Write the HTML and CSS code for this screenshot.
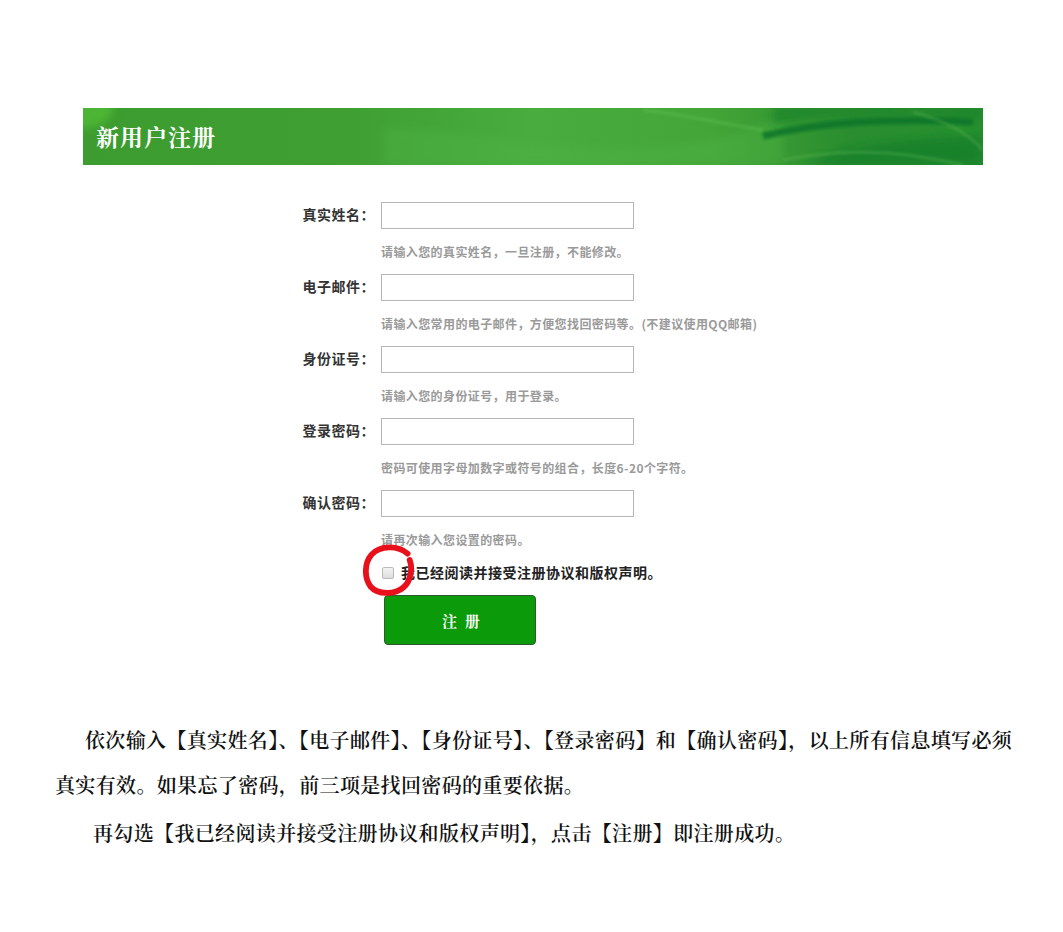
FILE: index.html
```html
<!DOCTYPE html>
<html lang="zh-CN">
<head>
<meta charset="utf-8">
<title>新用户注册</title>
<link rel="stylesheet" href="styles.css">
</head>
<body>
<div class="banner">
  <svg class="banner-bg" viewBox="0 0 900 57" preserveAspectRatio="none" aria-hidden="true">
    <defs>
      <linearGradient id="base" x1="0" y1="0" x2="1" y2="0">
        <stop offset="0" stop-color="#3d9c2f"/>
        <stop offset="0.3" stop-color="#3f9f33"/>
        <stop offset="0.5" stop-color="#48ad3e"/>
        <stop offset="0.7" stop-color="#43a537"/>
        <stop offset="0.85" stop-color="#2a8d2f"/>
        <stop offset="1" stop-color="#27902f"/>
      </linearGradient>
      <filter id="blur" x="-20%" y="-50%" width="140%" height="200%">
        <feGaussianBlur stdDeviation="4"/>
      </filter>
      <filter id="blur2" x="-20%" y="-50%" width="140%" height="200%">
        <feGaussianBlur stdDeviation="1.5"/>
      </filter>
    </defs>
    <rect width="900" height="57" fill="url(#base)"/>
    <ellipse cx="0" cy="0" rx="30" ry="20" fill="#5ccf3a" opacity="0.5" filter="url(#blur)"/>
    <path d="M300 20 C380 20 460 45 560 40 C620 37 660 25 700 10 L700 57 L300 57 Z" fill="#4fb447" opacity="0.4" filter="url(#blur)"/>
    <path d="M720 57 C760 38 820 30 900 28 L900 57 Z" fill="#15802a" opacity="0.85" filter="url(#blur)"/>
    <path d="M690 16 C760 2 830 4 900 12 L900 0 L690 0 Z" fill="#1a842b" opacity="0.85" filter="url(#blur)"/>
    <path d="M680 28 C740 14 800 10 890 14" stroke="#0f7529" stroke-width="7" fill="none" opacity="0.85" filter="url(#blur2)"/>
    <path d="M700 52 C760 40 820 42 880 57" stroke="#6cc05c" stroke-width="2" fill="none" opacity="0.45" filter="url(#blur2)"/>
    <path d="M830 4 C860 12 885 25 900 42" stroke="#72c462" stroke-width="2" fill="none" opacity="0.4" filter="url(#blur2)"/>
    <path d="M560 2 C600 6 640 16 680 22" stroke="#6fd060" stroke-width="3" fill="none" opacity="0.3" filter="url(#blur2)"/>
  </svg>
  <h1 class="banner-title">新用户注册</h1>
</div>

<form class="reg-form">
  <div class="field">
    <label class="field-label">真实姓名：</label>
    <input class="field-input" type="text">
  </div>
  <div class="hint">请输入您的真实姓名，一旦注册，不能修改。</div>

  <div class="field">
    <label class="field-label">电子邮件：</label>
    <input class="field-input" type="text">
  </div>
  <div class="hint">请输入您常用的电子邮件，方便您找回密码等。(不建议使用QQ邮箱)</div>

  <div class="field">
    <label class="field-label">身份证号：</label>
    <input class="field-input" type="text">
  </div>
  <div class="hint">请输入您的身份证号，用于登录。</div>

  <div class="field">
    <label class="field-label">登录密码：</label>
    <input class="field-input" type="password">
  </div>
  <div class="hint">密码可使用字母加数字或符号的组合，长度6-20个字符。</div>

  <div class="field">
    <label class="field-label">确认密码：</label>
    <input class="field-input" type="password">
  </div>
  <div class="hint">请再次输入您设置的密码。</div>

  <div class="agree">
    <span class="check"></span>
    <span class="agree-text">我已经阅读并接受注册协议和版权声明。</span>
    <svg class="circle-mark" viewBox="0 0 50 50" aria-hidden="true">
      <path d="M43 10 C34 2 17 2 9 11 C2 19 2 33 8 41 C15 49 31 49 39 42 C46 36 48 24 45 16" fill="none" stroke="#e8101a" stroke-width="5.5" stroke-linecap="round"/>
    </svg>
  </div>

  <button class="submit" type="button">注 册</button>
</form>

<div class="notes">
  <p class="note note-first">依次输入【真实姓名】、【电子邮件】、【身份证号】、【登录密码】和【确认密码】，以上所有信息填写必须<br>真实有效。如果忘了密码，前三项是找回密码的重要依据。</p>
  <p class="note note-second">再勾选【我已经阅读并接受注册协议和版权声明】，点击【注册】即注册成功。</p>
</div>
</body>
</html>
```

FILE: styles.css
```css
* { box-sizing: border-box; }

html, body {
  margin: 0;
  padding: 0;
  background: #ffffff;
}

body {
  padding-top: 108px;
  font-family: "Liberation Sans", "Noto Sans CJK SC", sans-serif;
  color: #222;
}

.banner {
  position: relative;
  width: 900px;
  height: 57px;
  margin-left: 83px;
  overflow: hidden;
  display: flex;
  align-items: center;
}

.banner-bg {
  position: absolute;
  inset: 0;
  width: 100%;
  height: 100%;
}

.banner-title {
  position: relative;
  margin: 0 0 0 13px;
  font-family: "Noto Serif CJK SC", "Noto Sans CJK SC", serif;
  font-size: 23px;
  font-weight: 700;
  color: #ffffff;
  letter-spacing: 1px;
  line-height: 1;
}

.reg-form {
  margin: 37px 0 0 288px;
  display: flex;
  flex-direction: column;
  align-items: flex-start;
}

.field {
  display: flex;
  align-items: center;
  height: 27px;
}

.field + .hint { margin-top: 16px; }
.hint + .field { margin-top: 15px; }

.field-label {
  width: 87px;
  margin-top: -3px;
  text-align: right;
  font-size: 14px;
  font-weight: 700;
  color: #333;
  font-family: "Noto Sans CJK SC", sans-serif;
  letter-spacing: 0.5px;
}

.field-input {
  margin-left: 6px;
  width: 253px;
  height: 27px;
  border: 1px solid #b5b5b5;
  background: #fff;
  padding: 0 4px;
  font-size: 13px;
}

.hint {
  margin-left: 93px;
  font-size: 12px;
  line-height: 14px;
  color: #9a9a9a;
  font-weight: 700;
  font-family: "Noto Sans CJK SC", sans-serif;
  letter-spacing: 0.4px;
}

.agree {
  position: relative;
  margin: 17px 0 0 93px;
  height: 18px;
  display: flex;
  align-items: center;
}

.check {
  width: 12px;
  height: 12px;
  border: 1px solid #b9b9b9;
  border-radius: 2px;
  background: linear-gradient(#f4f4f4, #dcdcdc);
  margin-left: 1px;
}

.agree-text {
  margin-left: 7px;
  margin-top: -3px;
  font-size: 14px;
  font-weight: 700;
  color: #222;
  font-family: "Noto Sans CJK SC", sans-serif;
  letter-spacing: 0.5px;
}

.circle-mark {
  position: absolute;
  left: -19px;
  top: -21px;
  width: 53px;
  height: 53px;
  pointer-events: none;
}

.submit {
  margin: 13px 0 0 96px;
  width: 152px;
  height: 50px;
  background: #0a9a0a;
  border: 1px solid #2b5a2b;
  border-radius: 4px;
  color: #ffffff;
  font-size: 15px;
  font-weight: 700;
  font-family: "Noto Serif CJK SC", "Noto Sans CJK SC", serif;
  letter-spacing: 2px;
  padding: 0 0 0 4px;
}

.notes {
  margin: 72px 0 0 55px;
  width: 980px;
}

.note {
  margin: 0;
  font-family: "Noto Serif CJK SC", "Noto Sans CJK SC", serif;
  font-size: 20px;
  font-weight: 600;
  line-height: 45px;
  color: #111;
  white-space: nowrap;
  letter-spacing: 0.35px;
}

.note-first { text-indent: 30px; }
.note-second { text-indent: 38px; margin-top: 3px; }
```
